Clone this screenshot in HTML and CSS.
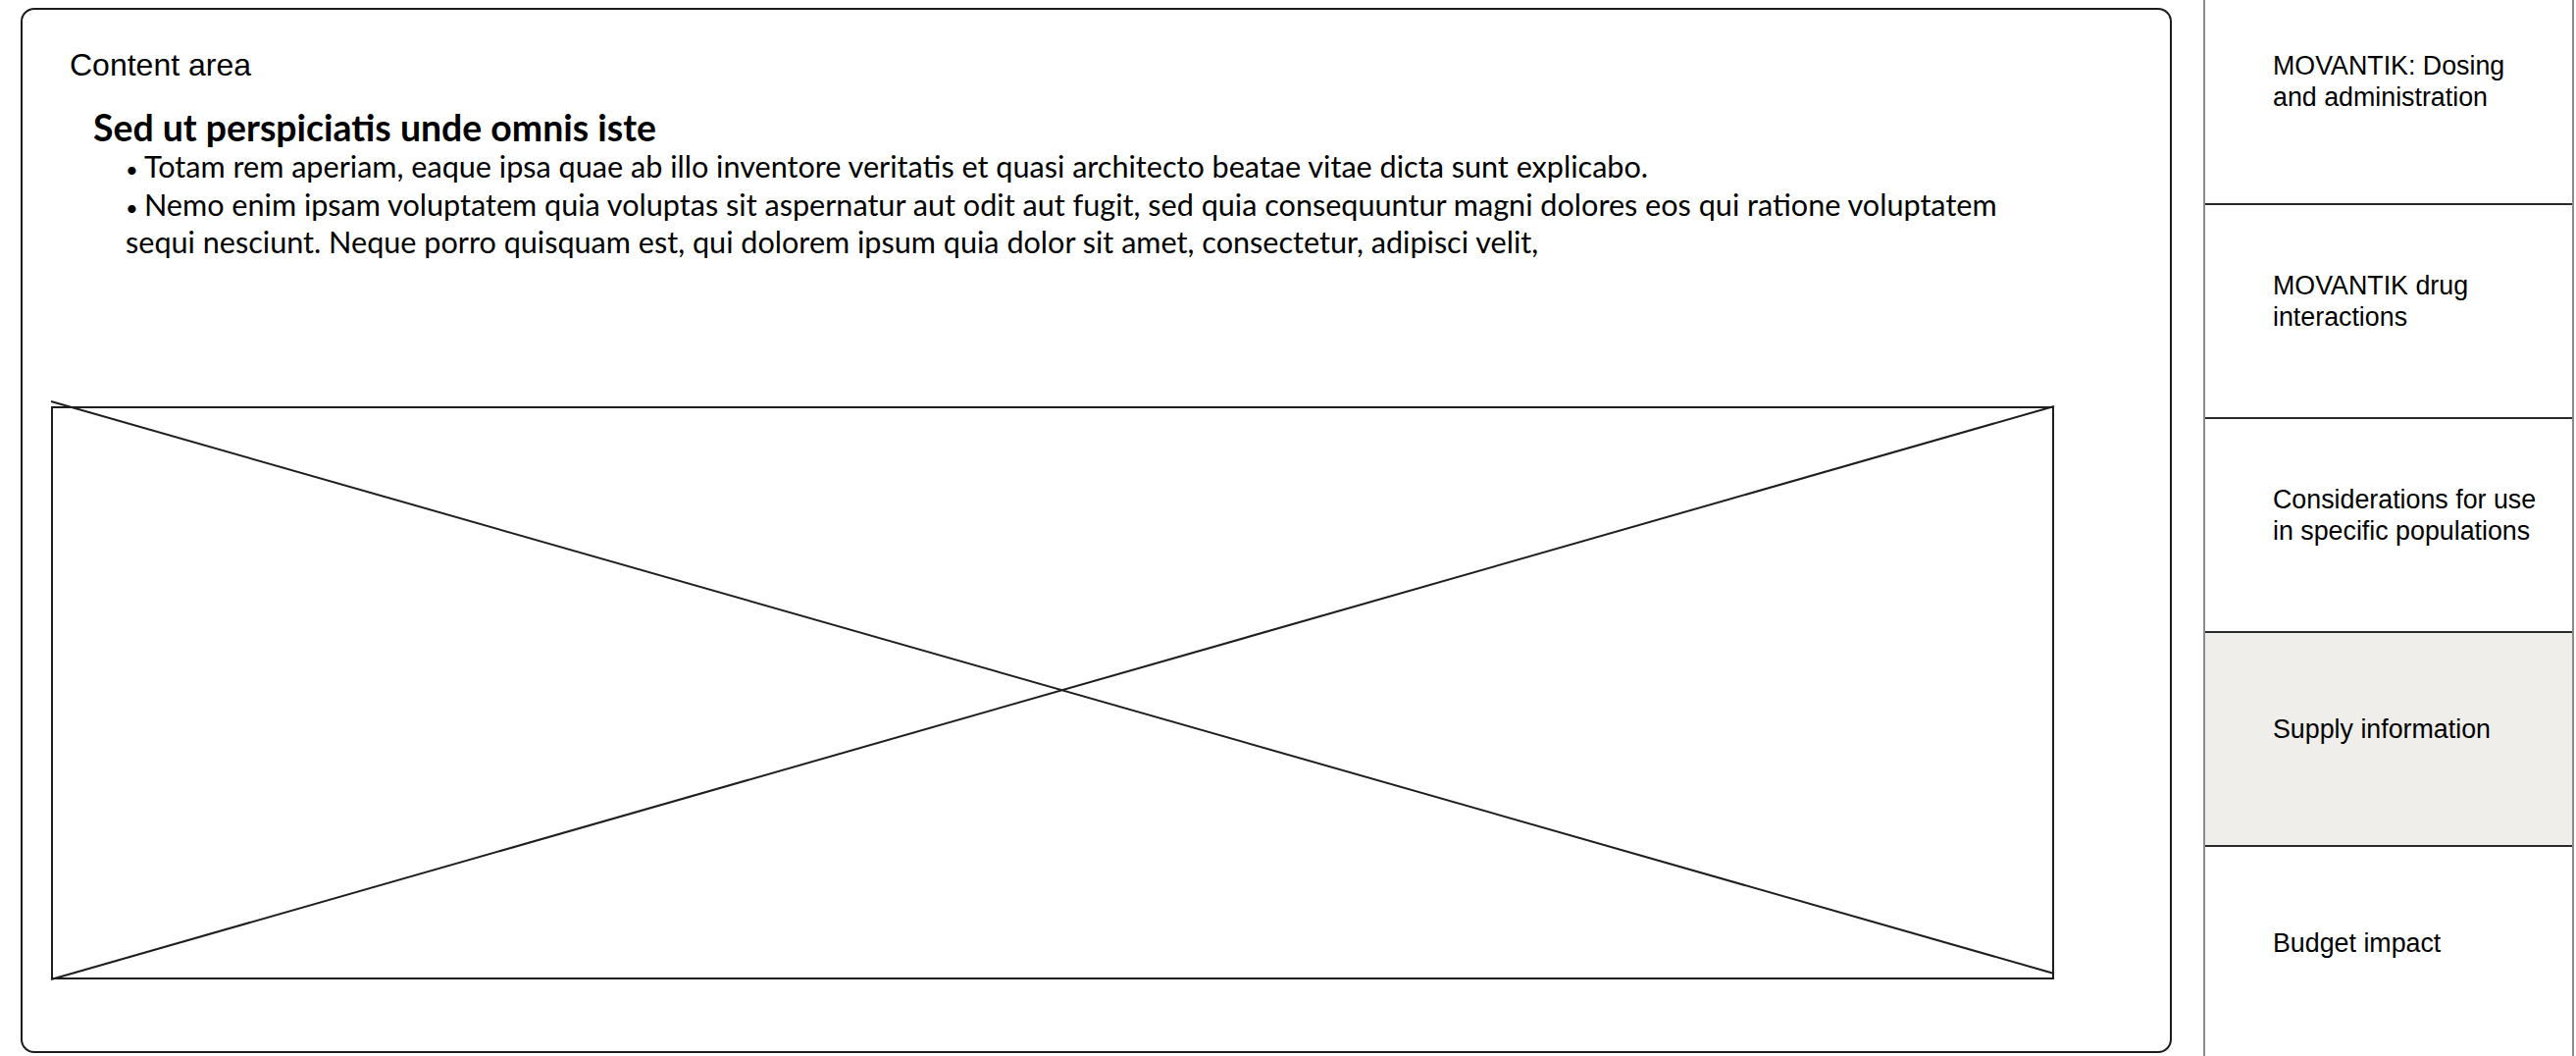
FILE: index.html
```html
<!DOCTYPE html>
<html lang="en">
<head>
    <meta charset="UTF-8">
    <meta name="viewport" content="width=device-width, initial-scale=1.0">
    <title>Supply information</title>
    <link rel="stylesheet" href="styles.css">
</head>
<body>
    <div class="page">
        <!-- Main content card -->
        <main class="content">
            <div class="content-title">Content area</div>
            <section class="section">
                <h2>Sed ut perspiciatis unde omnis iste</h2>
                <ul class="bullets">
                    <li>Totam rem aperiam, eaque ipsa quae ab illo inventore veritatis et quasi architecto beatae vitae dicta sunt explicabo.</li>
                    <li>Nemo enim ipsam voluptatem quia voluptas sit aspernatur aut odit aut fugit, sed quia consequuntur magni dolores eos qui ratione voluptatem sequi nesciunt. Neque porro quisquam est, qui dolorem ipsum quia dolor sit amet, consectetur, adipisci velit,</li>
                </ul>
            </section>

            <!-- Image placeholder -->
            <svg class="placeholder" width="2042" height="584" viewBox="0 0 2042 584">
                <rect x="1" y="1" width="2040" height="582" fill="none" stroke="#1e1e1e" stroke-width="2" />
                <line x1="0" y1="-5" x2="2042" y2="578" stroke="#1e1e1e" stroke-width="2" />
                <line x1="0" y1="584" x2="2042" y2="0" stroke="#1e1e1e" stroke-width="2" />
            </svg>
        </main>

        <!-- Side navigation -->
        <nav class="sidebar">
            <a class="nav-item" href="#">MOVANTIK: Dosing and administration</a>
            <a class="nav-item" href="#">MOVANTIK drug interactions</a>
            <a class="nav-item" href="#">Considerations for use in specific populations</a>
            <a class="nav-item active" href="#">Supply information</a>
            <a class="nav-item" href="#">Budget impact</a>
        </nav>
    </div>
</body>
</html>
```

FILE: styles.css
```css
/* General Body Styles */
body {
    margin: 0;
    background-color: #fff;
    color: #000;
    overflow: hidden;
}

/* Page Layout */
.page {
    display: flex;
    gap: 32px;
    height: 1076px;
    padding: 8px 5px 3px 21px;
    box-sizing: border-box;
}

/* Content Card */
.content {
    width: 2193px;
    flex-shrink: 0;
    border: 2px solid #1c1c1c;
    border-radius: 14px;
    padding: 38px 0 0 48px;
    box-sizing: border-box;
}

.content-title {
    font-family: "Liberation Sans", Arial, sans-serif;
    font-size: 32px;
    line-height: 36px;
}

/* Text Section */
.section {
    font-family: Lato, "Open Sans", sans-serif;
    padding-left: 24px;
}

.section h2 {
    margin: 24px 0 0;
    font-size: 37.4px;
    line-height: 44px;
    font-weight: 700;
}

.bullets {
    list-style: none;
    margin: 0;
    padding: 0 0 0 33px;
    max-width: 1950px;
    font-size: 30.6px;
    line-height: 35.5px;
}

.bullets li::before {
    content: "\2022";
    font-size: 0.72em;
    margin-right: 0.28em;
}

/* Image Placeholder */
.placeholder {
    display: block;
    margin: 149px 0 0 -19px;
    overflow: visible;
}

/* Sidebar Navigation */
.sidebar {
    width: 374px;
    flex-shrink: 0;
    align-self: flex-start;
    margin-top: -17px;
    border-left: 2px solid #8a8a8a;
    border-right: 2px solid #8a8a8a;
}

.nav-item {
    display: flex;
    align-items: center;
    height: 218px;
    padding: 0 26px 20px 69px;
    box-sizing: border-box;
    border-bottom: 2px solid #2a2a2a;
    font-family: "Liberation Sans", Arial, sans-serif;
    font-size: 26.8px;
    line-height: 32px;
    color: #000;
    text-decoration: none;
}

.nav-item:first-child {
    padding-bottom: 32px;
}

.nav-item.active {
    background-color: #efeeea;
}
```
